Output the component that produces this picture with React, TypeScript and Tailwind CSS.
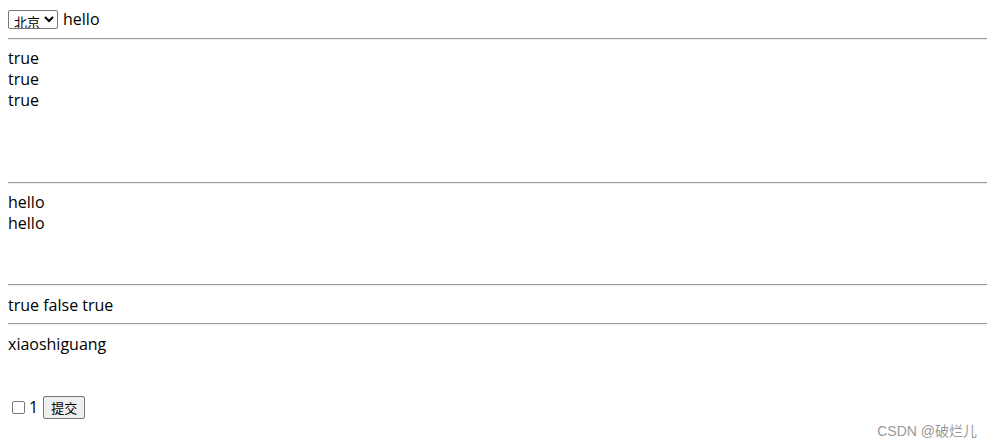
import React from 'react'

function Rule() {
  return <div className="h-[2px] border-t border-t-[#9a9a9a] border-b border-b-[#eeeeee] mr-[-3px]" />
}

export default function App() {
  return (
    <div className="relative h-[448px] bg-white text-black px-2 pt-[9px] text-[16px] leading-[21px] font-['Open_Sans','Noto_Sans_CJK_SC',sans-serif]">
      <div className="flex items-center gap-[5px] h-[21px]">
        <select className="h-[19px] py-0 border border-[#767676] rounded-[2px] text-[13px] leading-[13px] pl-[1px] pr-0 bg-white font-['Noto_Sans_CJK_SC',sans-serif]" defaultValue="bj">
          <option value="bj">北京</option>
          <option value="sh">上海</option>
        </select>
        <span>hello</span>
      </div>
      <div className="mt-[8px]"><Rule /></div>

      <div className="pt-[8px] h-[142px]">
        <div>true</div>
        <div>true</div>
        <div>true</div>
      </div>
      <Rule />

      <div className="pt-[8px] h-[100px]">
        <div>hello</div>
        <div>hello</div>
      </div>
      <Rule />

      <div className="pt-[9px] h-[37px]">true false true</div>
      <Rule />

      <div className="pt-[9px]">xiaoshiguang</div>
      <div className="flex items-center mt-[40px] h-[24px] pl-[4px]">
        <input type="checkbox" className="w-[13px] h-[13px] m-0 appearance-none border border-[#767676] rounded-[2px] bg-white" />
        <span className="ml-[4px]">1</span>
        <button className="ml-[5px] h-[23px] px-[7px] border border-[#767676] rounded-[2px] bg-[#efefef] text-[13px] font-['Noto_Sans_CJK_SC',sans-serif]">提交</button>
      </div>

      <div className="absolute right-[15px] bottom-[9px] text-[14px] leading-[16px] text-[#999999] font-['Liberation_Sans','Noto_Sans_CJK_SC',sans-serif]">
        CSDN @破烂儿
      </div>
    </div>
  )
}
